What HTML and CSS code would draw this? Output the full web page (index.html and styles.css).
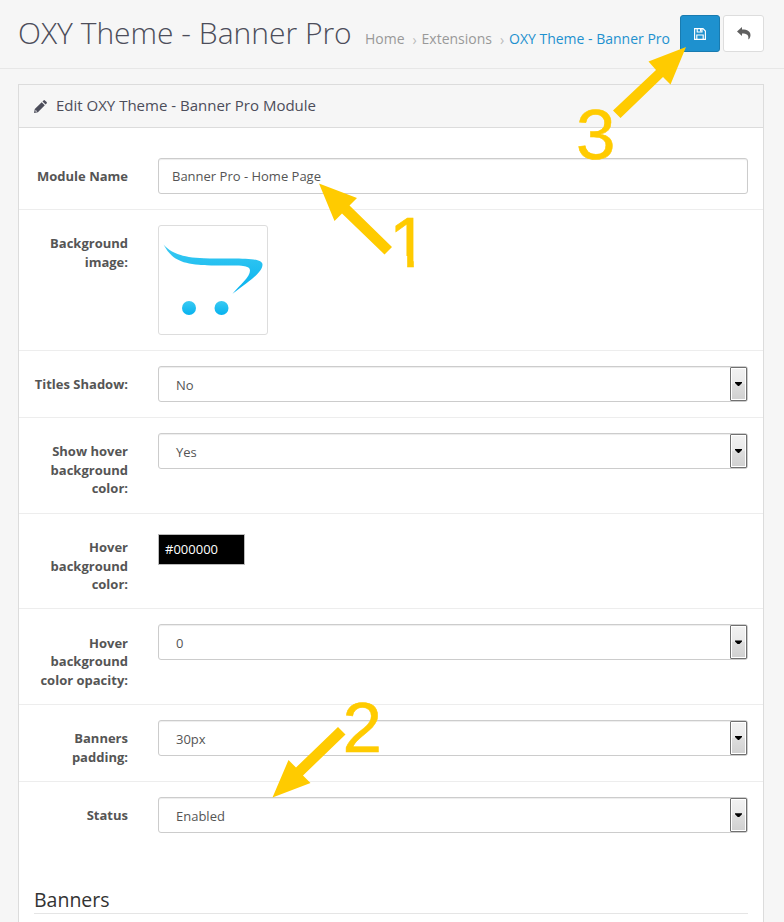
FILE: index.html
```html
<!DOCTYPE html>
<html lang="en">
<head>
<meta charset="utf-8">
<title>OXY Theme - Banner Pro</title>
<link rel="stylesheet" href="styles.css">
</head>
<body>
<header class="page-header">
  <h1>OXY Theme - Banner Pro</h1>
  <nav class="breadcrumb"><a>Home</a><i>›</i><a>Extensions</a><i>›</i><a class="current">OXY Theme - Banner Pro</a></nav>
  <div class="buttons">
    <button class="btn primary" aria-label="Save"><svg width="12" height="12" viewBox="0 0 12 12"><path d="M.6.6H9L11.4 3V11.4H.6ZM3.2.6V4H8V.6M2.8 11.4V7H9.2V11.4" fill="none" stroke="#fff" stroke-width="1.15"/><path d="M6 .8H7.5V3.4H6Z" fill="#fff"/></svg></button>
    <button class="btn" aria-label="Back"><svg width="14" height="13" viewBox="0 0 14 13"><path d="M0 4.5 5 0V2.6C10.5 2.6 13.5 4.5 13.5 8.2 13.5 9.7 12.8 11.2 11.8 12.2 11.5 12.4 11.2 12.3 11.3 11.9 12 8 9.8 6.5 5 6.5V9Z" fill="#606060"/></svg></button>
  </div>
</header>
<main class="panel">
  <div class="panel-heading"><svg width="13" height="13" viewBox="0 0 13 13"><path d="M0 13 .8 9.1 7.7 2.2 10.8 5.3 3.9 12.2ZM8.5 1.4 9.5.4Q10.2-.2 10.9.4L12.6 2.1Q13.2 2.8 12.6 3.5L11.6 4.5Z" fill="#4c4d5a"/><path d="M1.5 9.8 3.2 11.5 1.5 11.8Z" fill="#f6f6f6"/></svg><h2>Edit OXY Theme - Banner Pro Module</h2></div>
  <form class="panel-body">
    <div class="row"><label>Module Name</label><div class="input">Banner Pro - Home Page</div></div>
    <div class="row"><label>Background image:</label>
      <div class="thumb"><svg width="100" height="100" viewBox="0 0 100 100"><defs><linearGradient id="cart" x1="0" y1="0" x2="0" y2="1"><stop offset="0" stop-color="#3bcaf2"/><stop offset="1" stop-color="#06b2ef"/></linearGradient></defs><path d="M.5 14.5C8 23 19 27.5 41 28.300 65 29.200 99.500 26 99.500 34.500 99.500 42 88 50 69.500 63.800 77 55 87 47 87 40.500 87 35 78 35.500 53 35.500 19 35.500 9 30 .5 14.500Z" fill="url(#cart)"/><circle cx="26" cy="78" r="7" fill="url(#cart)"/><circle cx="58.500" cy="78" r="7" fill="url(#cart)"/></svg></div>
    </div>
    <div class="row"><label>Titles Shadow:</label><div class="input select"><span>No</span><b></b></div></div>
    <div class="row"><label>Show hover background color:</label><div class="input select"><span>Yes</span><b></b></div></div>
    <div class="row"><label>Hover background color:</label><div class="color">#000000</div></div>
    <div class="row"><label>Hover background color opacity:</label><div class="input select"><span>0</span><b></b></div></div>
    <div class="row"><label>Banners padding:</label><div class="input select"><span>30px</span><b></b></div></div>
    <div class="row"><label>Status</label><div class="input select"><span>Enabled</span><b></b></div></div>
    <h3>Banners</h3>
  </form>
</main>
<svg class="annotations" width="784" height="922" viewBox="0 0 784 922">
  <defs><clipPath id="stem"><path d="M380 200H413.800V280H407.200V256H380Z"/></clipPath></defs>
  <path d="M319 183.500 357 198 349.500 205.500 392 247 384.500 254.500 342 213.500 334.500 221ZM272.500 797.500 288.500 760 296 767.500 338 727 345.500 734.500 303 775.500 310.500 783ZM686 47 670.500 84.500 663 77 620.500 118 613 110.500 656 70 648.500 61.500Z"/>
  <text x="389" y="267" clip-path="url(#stem)">1</text>
  <text x="342.500" y="752">2</text>
  <text x="576" y="158.500">3</text>
</svg>
</body>
</html>
```
FILE: styles.css
```css
* { box-sizing: border-box; }
body {
  margin: 0;
  height: 922px;
  overflow: hidden;
  position: relative;
  background: #f6f6f6;
  color: #555;
  font: 13px/18.57px "Open Sans", sans-serif;
}
.page-header {
  display: flex;
  height: 69px;
  padding: 15px 20px 0 18px;
  border-bottom: 1px solid #e7e7e7;
}
h1 {
  margin: 0;
  width: 347px;
  white-space: nowrap;
  color: #4c4d5a;
  font-size: 30px;
  font-weight: 300;
  line-height: 35px;
}
.breadcrumb {
  flex: 1;
  display: flex;
  padding-top: 14px;
  white-space: nowrap;
  color: #999;
  font-size: 14px;
  line-height: 20px;
}
.breadcrumb i {
  width: 17px;
  padding: 1px 0 0 8px;
  color: #bbb;
  font-style: normal;
}
.breadcrumb .current { color: #1e91cf; }
.buttons { display: flex; gap: 3px; }
.btn {
  display: flex;
  justify-content: center;
  align-items: center;
  width: 41px;
  height: 37px;
  padding: 0;
  border: 1px solid #ddd;
  border-radius: 3px;
  background: #fff;
}
.btn.primary {
  width: 40px;
  border-color: #197bb0;
  background: #1e91cf;
}
.panel {
  height: 860px;
  margin: 15px 20px 0 18px;
  border: 1px solid #dcdcdc;
  background: #fff;
}
.panel-heading {
  display: flex;
  align-items: center;
  gap: 9px;
  height: 43px;
  padding-left: 15px;
  border-bottom: 1px solid #dcdcdc;
  background: #f6f6f6;
}
h2 {
  margin: 0;
  padding-bottom: 2px;
  color: #4c4d5a;
  font-size: 15px;
  font-weight: 400;
  line-height: 18px;
}
.panel-body { padding-top: 15px; }
.row {
  display: flex;
  align-items: flex-start;
  padding: 15px;
}
.row + .row { border-top: 1px solid #ededed; }
label {
  width: 94px;
  margin: 0 30px -.3px 0;
  padding-top: 9.3px;
  font-weight: 700;
  text-align: right;
}
.input {
  display: flex;
  align-items: center;
  width: 590px;
  height: 36px;
  padding-left: 13px;
  border: 1px solid #ccc;
  border-radius: 3px;
  box-shadow: inset 0 1px 1px rgba(0, 0, 0, .075);
}
.select { padding-left: 17px; justify-content: space-between; }
.select span { padding-top: 2px; }
.select b {
  display: flex;
  justify-content: center;
  align-items: center;
  width: 17px;
  height: 34px;
  border: 1px solid #707070;
  border-radius: 1px;
  box-shadow: inset 0 0 0 1px #fff;
  background: linear-gradient(#f2f2f2, #e9e9e9 50%, #dedede 50%, #d0d0d0);
}
.select b::after {
  content: "";
  width: 7px;
  height: 4px;
  background: #000;
  clip-path: polygon(0 0, 100% 0, 100% 25%, 57% 100%, 43% 100%, 0 25%);
}
.thumb {
  width: 110px;
  height: 110px;
  padding: 4px;
  border: 1px solid #ddd;
  border-radius: 3px;
}
.thumb svg { display: block; }
.color {
  width: 87px;
  height: 31px;
  margin-top: 5px;
  padding: 5px 6px;
  border: 1px solid #bbb;
  background: #000;
  color: #fff;
}
h3 {
  height: 33px;
  margin: 33px 15px 0;
  padding-top: 6px;
  border-bottom: 1px solid #e5e5e5;
  color: #333;
  font-size: 19.5px;
  font-weight: 400;
  line-height: 26px;
}
.annotations {
  position: absolute;
  inset: 0;
  fill: #ffcb00;
  font: 71px "Liberation Sans", sans-serif;
}
.annotations text {
  stroke: #ffcb00;
  stroke-width: .5px;
}
```
